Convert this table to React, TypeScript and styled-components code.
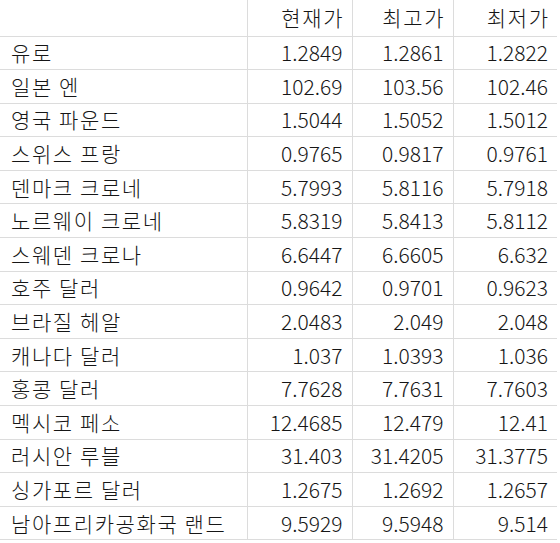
import * as React from "react";
import styled, { createGlobalStyle } from "styled-components";

const GlobalStyle = createGlobalStyle`
  html, body {
    margin: 0;
    padding: 0;
    background: #ffffff;
  }
`;

const Sheet = styled.table`
  width: 557px;
  border-collapse: collapse;
  table-layout: fixed;
  font-family: "Noto Sans CJK KR", "Noto Sans", sans-serif;
  font-size: 21px;
  font-weight: 300;
  color: #161616;
`;

const HeadRow = styled.tr`
  height: 36px;
`;

const Row = styled.tr`
  height: 33.6px;
`;

// Korean labels are set a touch wider than the digits, like the original sheet font.
const Cell = styled.td<{ $name?: boolean; $label?: boolean; $last?: boolean }>`
  padding: ${(p) => (p.$name ? "0 0 0 11px" : p.$label ? "0 7.4px 0 0" : "0 9px 0 0")};
  text-align: ${(p) => (p.$name ? "left" : "right")};
  letter-spacing: ${(p) => (p.$name || p.$label ? "1.6px" : "0")};
  border-bottom: 1px solid #dcdcdc;
  border-right: ${(p) => (p.$last ? "none" : "1px solid #dcdcdc")};
  white-space: nowrap;
  line-height: 1;
  vertical-align: middle;
`;

const rates: [string, string, string, string][] = [
  ["유로", "1.2849", "1.2861", "1.2822"],
  ["일본 엔", "102.69", "103.56", "102.46"],
  ["영국 파운드", "1.5044", "1.5052", "1.5012"],
  ["스위스 프랑", "0.9765", "0.9817", "0.9761"],
  ["덴마크 크로네", "5.7993", "5.8116", "5.7918"],
  ["노르웨이 크로네", "5.8319", "5.8413", "5.8112"],
  ["스웨덴 크로나", "6.6447", "6.6605", "6.632"],
  ["호주 달러", "0.9642", "0.9701", "0.9623"],
  ["브라질 헤알", "2.0483", "2.049", "2.048"],
  ["캐나다 달러", "1.037", "1.0393", "1.036"],
  ["홍콩 달러", "7.7628", "7.7631", "7.7603"],
  ["멕시코 페소", "12.4685", "12.479", "12.41"],
  ["러시안 루블", "31.403", "31.4205", "31.3775"],
  ["싱가포르 달러", "1.2675", "1.2692", "1.2657"],
  ["남아프리카공화국 랜드", "9.5929", "9.5948", "9.514"],
];

export default function App() {
  return (
    <>
      <GlobalStyle />
      <Sheet>
        <colgroup>
          <col style={{ width: 247 }} />
          <col style={{ width: 105 }} />
          <col style={{ width: 101 }} />
          <col style={{ width: 104 }} />
        </colgroup>
        <thead>
          <HeadRow>
            <Cell $name />
            <Cell $label>현재가</Cell>
            <Cell $label>최고가</Cell>
            <Cell $label $last>최저가</Cell>
          </HeadRow>
        </thead>
        <tbody>
          {rates.map(([name, now, high, low]) => (
            <Row key={name}>
              <Cell $name>{name}</Cell>
              <Cell>{now}</Cell>
              <Cell>{high}</Cell>
              <Cell $last>{low}</Cell>
            </Row>
          ))}
        </tbody>
      </Sheet>
    </>
  );
}
